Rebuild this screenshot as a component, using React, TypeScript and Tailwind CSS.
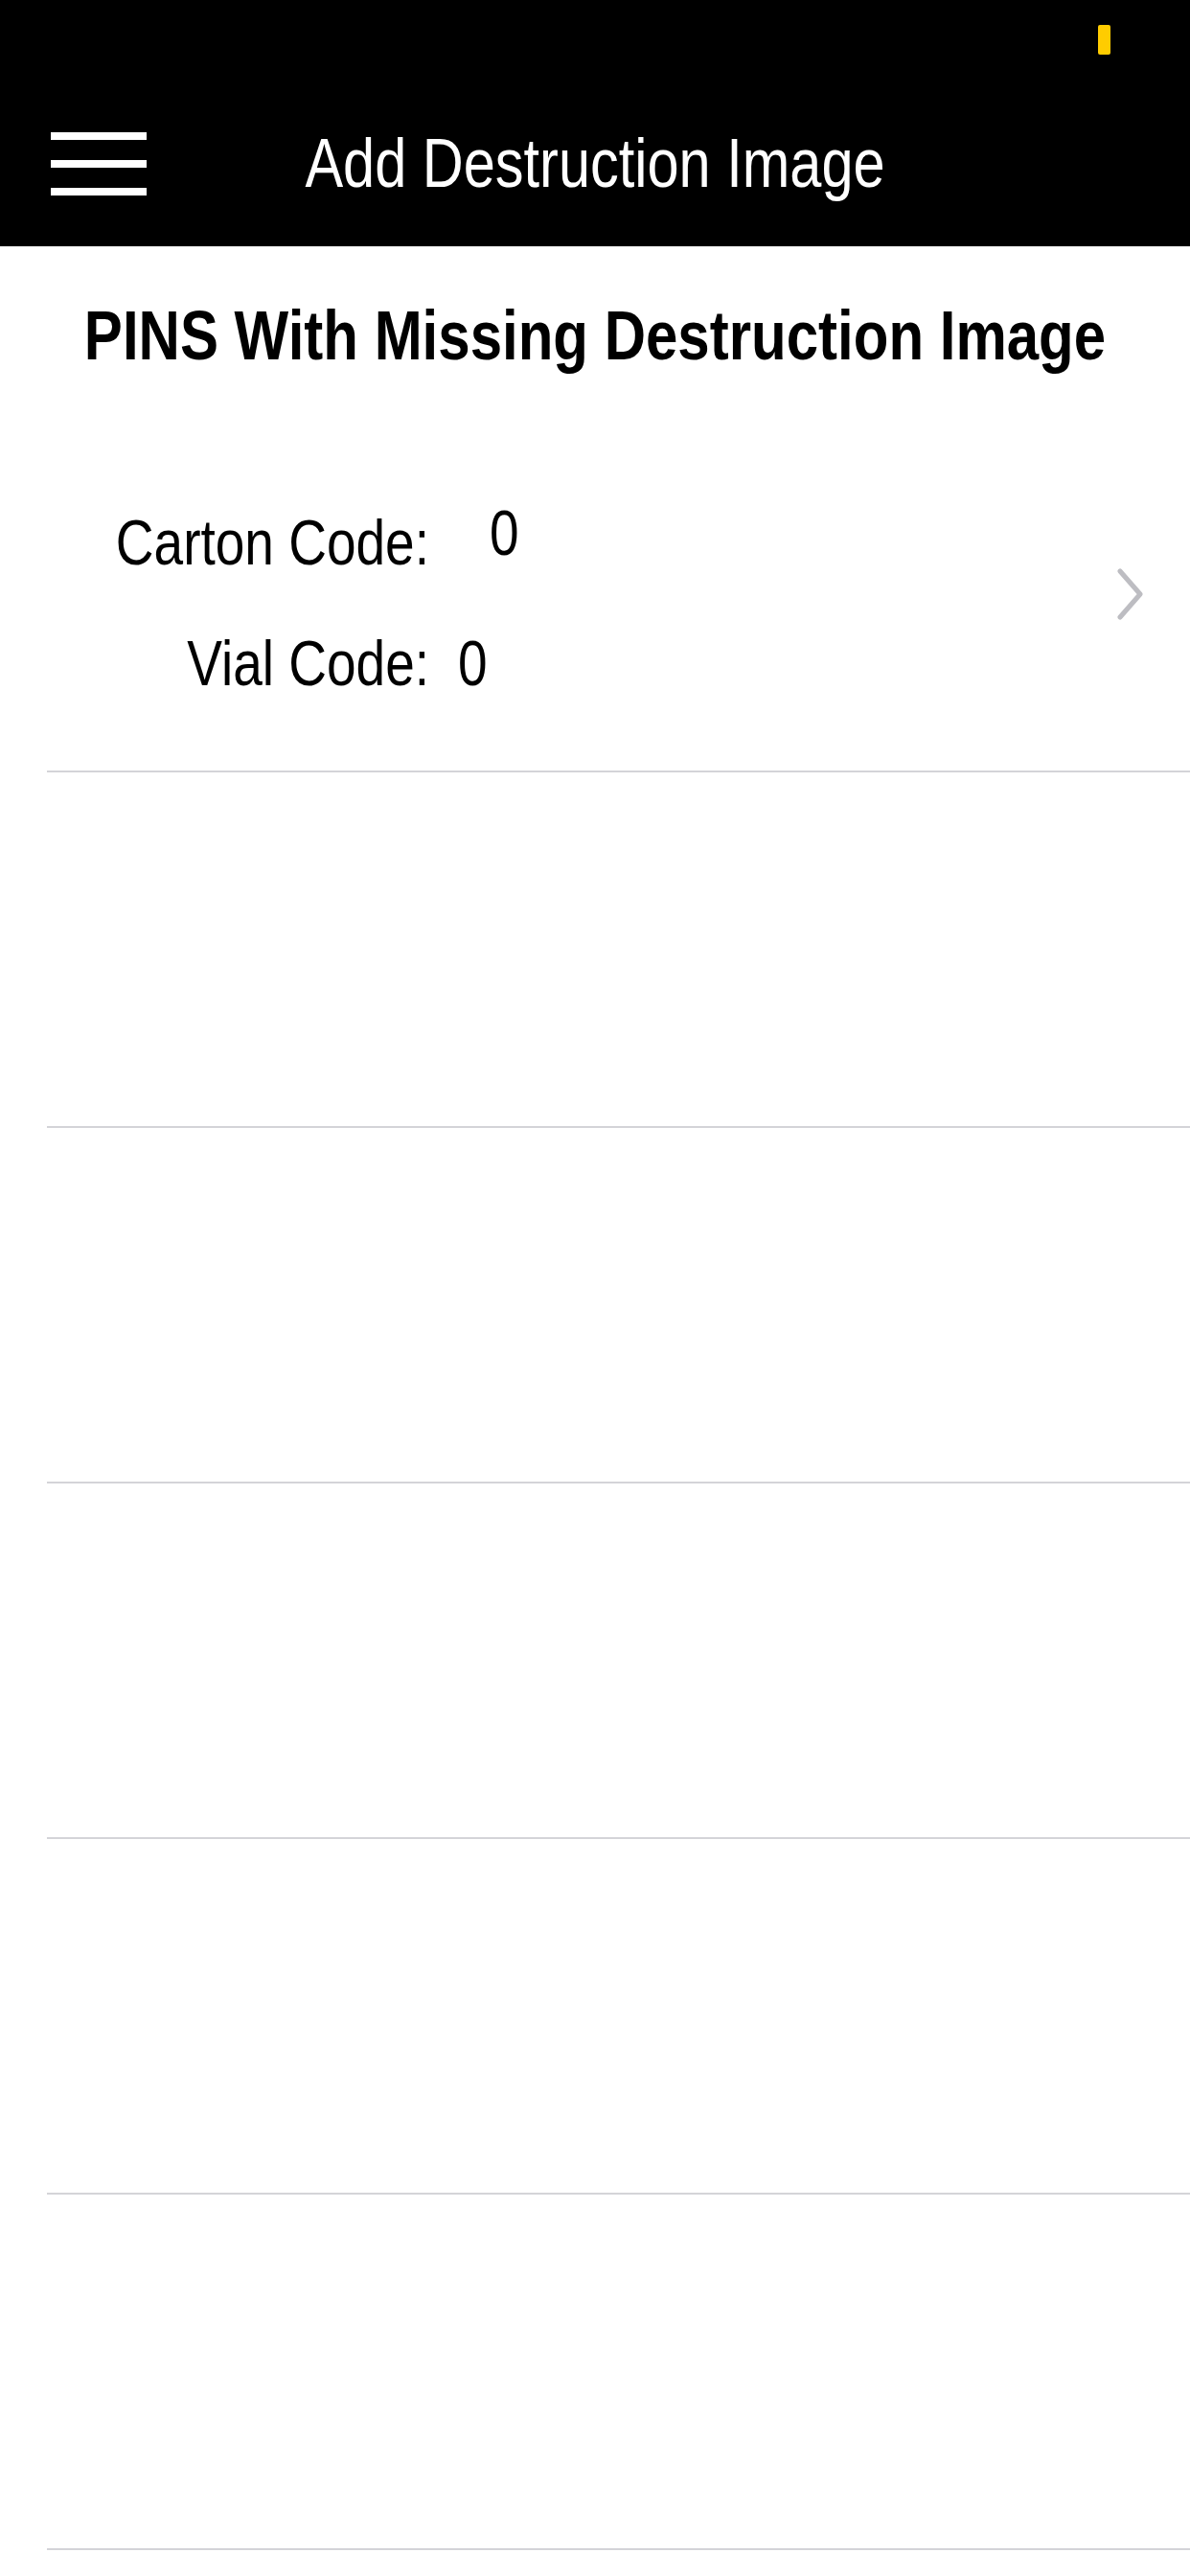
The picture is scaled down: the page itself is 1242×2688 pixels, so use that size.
export default function App() {
  const emptyRows = [0, 1, 2, 3, 4];
  return (
    <div className="w-[1242px] min-h-[2688px] bg-white font-['Liberation_Sans',Arial,sans-serif] overflow-hidden">
      <header className="bg-black h-[257px] flex flex-col">
        <div className="h-[84px] flex justify-end items-start pt-[26px] pr-[83px]">
          <div className="w-[13px] h-[31px] bg-[#ffcc00] rounded-[2px]" />
        </div>
        <div className="flex-1 grid grid-cols-[1fr_auto_1fr] items-center">
          <div className="pl-[53px] flex flex-col gap-[21px]">
            <div className="w-[100px] h-[8px] bg-white" />
            <div className="w-[100px] h-[8px] bg-white" />
            <div className="w-[100px] h-[8px] bg-white" />
          </div>
          <h1 className="text-white text-[59.5px] leading-none font-normal">
            <span className="inline-block scale-y-[1.2]">Add Destruction Image</span>
          </h1>
          <div />
        </div>
      </header>

      <div className="h-[178px] pt-[64px] text-center">
        <h2 className="text-black text-[60px] leading-none font-bold">
          <span className="inline-block scale-y-[1.19]">PINS With Missing Destruction Image</span>
        </h2>
      </div>

      <div className="flex flex-col">
        <div className="h-[369px] flex">
          <div className="flex-1 pt-[104px] flex flex-col gap-[71px] text-black text-[55px] leading-none">
            <div className="flex items-start">
              <span className="w-[448px] text-right inline-block scale-y-[1.22]">Carton Code:</span>
              <span className="ml-[63px] inline-block scale-y-[1.22] -translate-y-[10px]">0</span>
            </div>
            <div className="flex items-start">
              <span className="w-[448px] text-right inline-block scale-y-[1.22]">Vial Code:</span>
              <span className="ml-[30px] inline-block scale-y-[1.22]">0</span>
            </div>
          </div>
          <div className="self-center mr-[48px]">
            <svg width="30" height="54" viewBox="0 0 30 54" fill="none">
              <polyline
                points="5,3 26,27 5,51"
                stroke="#bdbdc2"
                strokeWidth="5"
                strokeLinecap="round"
                strokeLinejoin="round"
              />
            </svg>
          </div>
        </div>
        <div className="ml-[49px] h-[2px] bg-[#d4d4d8]" />
        {emptyRows.map((i) => (
          <div key={i} className="flex flex-col">
            <div className="h-[369px]" />
            <div className="ml-[49px] h-[2px] bg-[#d4d4d8]" />
          </div>
        ))}
      </div>
    </div>
  );
}
